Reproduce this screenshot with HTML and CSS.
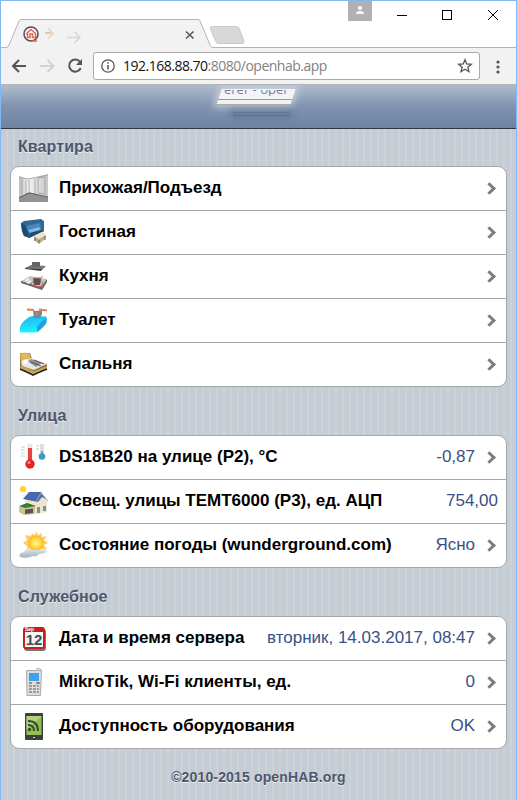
FILE: index.html
```
<!DOCTYPE html>
<html lang="ru">
<head>
<meta charset="utf-8">
<title>openHAB</title>
<link rel="stylesheet" href="styles.css">
</head>
<body>
<div class="window">
  <div class="tabstrip">
    <svg class="tabs" width="250" height="29" viewBox="0 0 250 29">
      <path d="M0 28.500H5Q7 28.500 8 26L18 2Q18.800.5 20 .5H197Q198.500.5 199 2L209 26Q210 28.500 212 28.500H250V29H0Z" fill="#f2f2f2"/>
      <path d="M0 28.500H5Q7 28.500 8 26L18 2Q18.800.5 20 .5H197Q198.500.5 199 2L209 26Q210 28.500 212 28.500H250" fill="none" stroke="#b4b4b4"/>
      <path d="M211 7.500H235Q237 7.500 238 9L243 22Q243.500 24.500 241 24.500H218Q215.500 24.500 214.500 22L209.500 10Q208.500 7.500 211 7.500Z" fill="#d8d8d8" stroke="#c9c9c9"/>
      <circle cx="30" cy="15" r="7" fill="#fafafa" stroke="#4e4e52" stroke-width="1.500"/>
      <path d="M25 15L30 10.500L35 15M26.500 14.500V18.500H29V15H31.500V18.500H34.500V14M31 22H36" fill="none" stroke="#ea6544" stroke-width="1.500"/>
      <path d="M44 14H50" stroke="#efc39f" stroke-width="2" fill="none"/>
      <path d="M47 9.500L52 14.500L47 19.500M66 18.500H79M73.500 13L79 18.500L73.500 24" stroke="#d8d5d0" stroke-width="1.600" fill="none"/>
      <path d="M185 12.500L192.500 19.500M192.500 12.500L185 19.500" stroke="#5a5a5a" stroke-width="1.700"/>
    </svg>
    <div class="controls">
      <span class="user"><svg width="24" height="20" viewBox="0 0 24 20"><circle cx="12" cy="7" r="2" fill="#fff"/><path d="M8 13Q8 10 12 10T16 13Z" fill="#fff"/></svg></span>
      <svg width="144" height="29" viewBox="0 0 144 29"><path d="M25 14.500H35" stroke="#000" fill="none"/><rect x="70.500" y="9.500" width="9" height="9" fill="none" stroke="#000"/><path d="M116 9L126 19M126 9L116 19" stroke="#000" fill="none"/></svg>
    </div>
  </div>
  <div class="toolbar">
    <svg class="nav" width="91" height="35" viewBox="0 0 91 35">
      <g fill="none" stroke-width="2"><path d="M25 18H12.500M18 12L12 18L18 24" stroke="#555"/><path d="M39 18H52M46.500 12L52.500 18L46.500 24" stroke="#d3d3d3"/><path d="M79 14A6 6 0 1 0 79.700 20" stroke="#555"/></g><path d="M81 11V17H75Z" fill="#555"/>
    </svg>
    <div class="address">
      <svg width="16" height="16" viewBox="0 0 16 16"><circle cx="8" cy="8" r="6.200" fill="none" stroke="#555" stroke-width="1.300"/><path d="M8 7V11.500M8 4.300V5.800" stroke="#555" stroke-width="1.500"/></svg>
      <span class="url"><b>192.168.88.70</b>:8080/openhab.app</span>
      <svg class="star" width="16" height="16" viewBox="0 0 16 16"><path d="M8 1.800L9.700 6L14.300 6.300L10.800 9.200L12 13.700L8 11.200L4 13.700L5.200 9.200L1.700 6.300L6.300 6Z" fill="none" stroke="#555" stroke-width="1.300"/></svg>
    </div>
    <svg class="dots" width="4" height="14" viewBox="0 0 4 14"><g fill="#555"><circle cx="2" cy="2" r="1.600"/><circle cx="2" cy="7" r="1.600"/><circle cx="2" cy="12" r="1.600"/></g></svg>
  </div>
  <header class="header">
    <span class="smudge-shadow"></span><span class="smudge"></span>
    <span class="title"><span>erer - oper</span></span>
  </header>
  <main>
    <h2>Квартира</h2>
    <ul>
      <li><svg class="icon" viewBox="0 0 30 30"><defs><linearGradient id="wall"><stop offset="0" stop-color="#bbb"/><stop offset=".3" stop-color="#f4f4f4"/><stop offset="1" stop-color="#c8c8c8"/></linearGradient></defs><path d="M0 3L8 6L29 1V24L10 21L0 25Z" fill="url(#wall)"/><path d="M0 25L10 20L29 24V29H0Z" fill="#929292"/><path d="M3 5V22M7 7V21M10 7V20M16 6V21M19 5L26 4V21L19 20ZM0 4L9 6L29 2" fill="none" stroke="#999" stroke-width=".8"/><path d="M0 25L10 20L29 24" fill="none" stroke="#666" stroke-width="1.200"/></svg><span class="label">Прихожая/Подъезд</span><i class="arrow"></i></li>
      <li><svg class="icon" viewBox="0 0 30 30"><path d="M2 6L5 4L22 2L25 4V14L10 21L5 19L3 14Z" fill="#326894"/><path d="M2 6L7 9L10 20L5 19L3 14Z" fill="#1f4a6d"/><path d="M7 9L21 6L22 11L9 14Z" fill="#4787bb"/><path d="M9 13L20 10L22 13L11 16Z" fill="#83b8e4"/><path d="M11 16L22 13L25 14L10 21Z" fill="#1e4c74"/><path d="M15 19L23 15L27 18L26 22L20 27L15 23Z" fill="#b6b08f"/><path d="M15 19L23 15L27 18L20 22Z" fill="#ebe6ce"/><path d="M16 21V24M20 23V26M26 19V23" stroke="#625f4e"/></svg><span class="label">Гостиная</span><i class="arrow"></i></li>
      <li><svg class="icon" viewBox="0 0 30 30"><path d="M6 7L12 4L27 5L23 9Z" fill="#777"/><path d="M13 1H21V6H13Z" fill="#666"/><path d="M6 7L23 8L22 10L6 8Z" fill="#444"/><path d="M2 20L11 15L28 18L22 26Z" fill="#c5c5c5"/><path d="M2 20L22 26L28 18V21L23 29L2 22Z" fill="#666"/><ellipse cx="18" cy="23" rx="6" ry="3" fill="none" stroke="#db514b"/><path d="M14 17H22L21 24H15Z" fill="#575055"/><path d="M14 17H22L24 15" stroke="#b68661" fill="none"/><path d="M6 20L10 18M8 22L12 20" stroke="#eee" stroke-width="2"/></svg><span class="label">Кухня</span><i class="arrow"></i></li>
      <li><svg class="icon" viewBox="0 0 30 30"><defs><linearGradient id="aqua" x2=".2" y2="1"><stop stop-color="#22b4f0"/><stop offset=".6" stop-color="#1ed6fa"/><stop offset="1" stop-color="#24f0ff"/></linearGradient></defs><path d="M1 27.500V22Q2 18 8 13.500Q11 11 14 11L27.500 11.500V17Q27 20 19 26.500Q18 27.500 16 27.500Z" fill="url(#aqua)"/><path d="M18 27V22Q20 18 27.500 13V17Q27 20 19 26.500Z" fill="#1fa3e0"/><path d="M8 4.500L15 5M20 4.500L28 5.500" stroke="#e77a4c" stroke-width="2" fill="none"/><path d="M14 6L23 5.500V9L21 13H15Z" fill="#6d8d92"/><path d="M16 7H20V10H16Z" fill="#bd8068"/></svg><span class="label">Туалет</span><i class="arrow"></i></li>
      <li><svg class="icon" viewBox="0 0 30 30"><path d="M1 4L11 4L13 10L28 15V19L14 27L1 19Z" fill="#89713c"/><path d="M1 5Q5 2 11 5L12 12L2 13Z" fill="#e2b75a"/><path d="M2 13L12 9L28 15L15 21L3 17Z" fill="#e8e8e8"/><path d="M8 12L12 10L23 14L17 18Z" fill="#929292"/><path d="M3 12L7 10L10 12L6 15Z" fill="#fff"/><path d="M2 16L15 22L28 17L28 20L15 26L1 20Z" fill="#c5a259"/><path d="M1 20L14 26L28 20" stroke="#27231f" stroke-width="1.500" fill="none"/><path d="M12 13L22 17M15 11L25 15" stroke="#555"/></svg><span class="label">Спальня</span><i class="arrow"></i></li>
    </ul>
    <h2>Улица</h2>
    <ul>
      <li><svg class="icon" viewBox="0 0 30 30"><path d="M2 5H6M2 8H6M2 11H6M2 14H6M17 4H20M17 7H20" stroke="#c8cbd0"/><path d="M11 2V23" stroke="#e6e6e6" stroke-width="5"/><path d="M11 6V23" stroke="#e94141" stroke-width="4"/><circle cx="11" cy="22" r="4.700" fill="#e12626"/><circle cx="10" cy="20.500" r="1.500" fill="#fb8980"/><path d="M23 2V13" stroke="#dce0e4" stroke-width="4"/><path d="M23 9V14" stroke="#58a7cb" stroke-width="2"/><circle cx="23" cy="14.500" r="3.300" fill="#4697c2"/></svg><span class="label">DS18B20 на улице (P2), °C</span><span class="value">-0,87</span><i class="arrow"></i></li>
      <li><svg class="icon" viewBox="0 0 30 30"><circle cx="4" cy="3" r="3" fill="#ffd129"/><path d="M6 12L22 6L28 15V26L18 28L7 24Z" fill="#eee6cb"/><path d="M4 13L10 6L22 6L28 14L23 11L19 16Z" fill="#4669b1"/><path d="M17 16L22 7L29 15" fill="none" stroke="#b8a99c"/><path d="M0 21L8 17L16 20V28L5 29L0 26Z" fill="#d1c38e"/><path d="M0 20L8 17L17 20L6 22Z" fill="#397a37"/><path d="M6 23.500L14 22.500V27L6 28Z" fill="#555"/><path d="M18 21H21V27H18ZM24 20H27V25H24Z" fill="#7695a2"/></svg><span class="label">Освещ. улицы TEMT6000 (P3), ед. АЦП</span><span class="value wide">754,00</span></li>
      <li><svg class="icon" viewBox="0 0 30 30"><defs><radialGradient id="sun"><stop stop-color="#fff3a1"/><stop offset=".65" stop-color="#ffdc3b"/><stop offset="1" stop-color="#ffae25"/></radialGradient><linearGradient id="cloud" x2="0" y2="1"><stop stop-color="#e3e9ed"/><stop offset="1" stop-color="#9fb1bb"/></linearGradient></defs><path d="M17 1L19 5L23 3L23 7L28 6L25 10L29 13L25 15L28 20L22 19L18 23L14 20L8 21L8 16L4 13L8 10L6 5L12 6L13 3L16 5Z" fill="#ffce61"/><circle cx="17" cy="13" r="7.500" fill="url(#sun)"/><path d="M1 27Q-1 23 5 22Q8 16 13 20Q15 19 18 20Q27 19 28 22Q23 24 20 24Q18 27 14 26Q8 29 1 27Z" fill="url(#cloud)"/></svg><span class="label">Состояние погоды (wunderground.com)</span><span class="value">Ясно</span><i class="arrow"></i></li>
    </ul>
    <h2>Служебное</h2>
    <ul>
      <li><svg class="icon" viewBox="0 0 30 30"><rect x="5" y="6" width="22" height="22" rx="3" fill="#777"/><rect x="4" y="4" width="22" height="22" rx="3" fill="#c12220"/><path d="M6 9H24V24H6Z" fill="#f5f5f5"/><text class="month" x="6" y="8">Sep</text><text class="day" x="15" y="22" text-anchor="middle">12</text></svg><span class="label">Дата и время сервера</span><span class="value">вторник, 14.03.2017, 08:47</span><i class="arrow"></i></li>
      <li><svg class="icon" viewBox="0 0 30 30"><rect x="17.500" y="1.500" width="4" height="9" rx="1" fill="#eee" stroke="#aaa"/><path d="M7.500 3.500H22.500L21.500 28.500H8Z" fill="#ddd" stroke="#aaa"/><path d="M10 6H20V14H10Z" fill="#3ea1ef"/><path d="M10 16H13M18 16H21" stroke="#77a866" stroke-width="2"/><path d="M17 16H20" stroke="#d25757" stroke-width="1.500"/><path d="M10 19H13M14 19H17M18 19H20M10 22H13M14 22H17M18 22H20M10 25H13M14 25H17M18 25H20" stroke="#888" stroke-width="1.500"/></svg><span class="label">MikroTik, Wi-Fi клиенты, ед.</span><span class="value">0</span><i class="arrow"></i></li>
      <li><svg class="icon" viewBox="0 0 30 30"><rect x="6" y="2" width="18" height="27" rx="1" fill="#3b403c"/><path d="M7.500 5H22.500V24H7.500Z" fill="#93bd55"/><path d="M7.500 5H22.500L7.500 19Z" fill="#b5cf82"/><path d="M9 10Q19 10 19 20M9 14Q15 14 15 20" fill="none" stroke="#39492d" stroke-width="2"/><circle cx="10.500" cy="18.500" r="1.700" fill="#39492d"/><path d="M14 26.500H16" stroke="#ccc"/></svg><span class="label">Доступность оборудования</span><span class="value">OK</span><i class="arrow"></i></li>
    </ul>
    <footer>©2010-2015 openHAB.org</footer>
  </main>
</div>
</body>
</html>
```
FILE: styles.css
```
* { box-sizing: border-box; }
body { margin: 0; font-family: "Liberation Sans", Arial, sans-serif; }
svg { display: block; flex-shrink: 0; }
.window { height: 800px; overflow: hidden; border: 1px solid #82b8f6; border-bottom: 0; background: #fff; }
.tabstrip { height: 47px; display: flex; justify-content: space-between; border-bottom: 1px solid #b4b4b4; }
.tabs { margin-top: 18px; }
.controls { display: flex; width: 168px; }
.user { width: 24px; height: 20px; background: #b1b1b1; }
.toolbar { height: 37px; display: flex; background: #f2f2f2; border-bottom: 1px solid #b5b5b5; }
.nav { margin-right: 1px; }
.address { width: 387px; height: 28px; margin-top: 4px; padding: 0 6px; display: flex; align-items: center; gap: 7px; background: #fff; border: 1px solid #a9a9a9; border-radius: 3px; }
.url { font: 14px/20px "Open Sans", sans-serif; letter-spacing: -.5px; color: #828282; white-space: nowrap; }
.url b { font-weight: 400; color: #111; }
.star { margin-left: auto; }
.dots { margin: 12px 0 0 16px; }
.header { position: relative; height: 44px; overflow: hidden; border-bottom: 1px solid #2d3642; background: linear-gradient(#b0bccd, #8194b0 48%, #6d84a2); }
.smudge { position: absolute; left: 218px; top: 4px; width: 74px; height: 16px; background: linear-gradient(#f4f4f6 10px, #999 10px 11px, #f0f0f0 11px 15px, #aaa 15px); transform: skewX(-18deg); box-shadow: 0 0 7px 3px #dfe3e999; }
.smudge-shadow { position: absolute; left: 232px; top: 22px; width: 57px; height: 10px; background: linear-gradient(#667e9e 5px, #5a7191 5px 6px, #667e9e 6px 8px, #5a7191 8px 9px, #667e9e 9px); box-shadow: 0 0 6px 3px #667e9e; }
.title { position: absolute; left: 223px; top: 5px; height: 6px; overflow: hidden; font: 13px/18px "Open Sans", sans-serif; color: #738096; white-space: nowrap; }
.title span { display: block; margin-top: -10px; }
main { height: 672px; padding: 0 9px; background: repeating-linear-gradient(90deg, #c5ccd3 0 5px, #cbd2d8 5px 7px); }
h2 { height: 37px; margin: 0; padding: 8px 8px 0; font-size: 16px; line-height: 20px; letter-spacing: .1px; color: #4d566c; text-shadow: 0 1px #ffffffb3; }
ul + h2 { height: 48px; padding-top: 19px; }
ul { margin: 0; padding: 0; list-style: none; border: 1px solid #a5a8ab; border-radius: 9px; overflow: hidden; background: #fff; }
li { height: 44px; display: flex; padding: 0 9px 0 8px; }
li + li { border-top: 1px solid #a5a8ab; }
li:first-child { height: 43px; }
.icon { width: 30px; height: 30px; margin: 6px 10px 0 0; }
.label, .value { font-size: 17px; line-height: 20px; margin-top: 11px; white-space: nowrap; }
.label { font-weight: 700; }
.value { margin-left: auto; color: #395185; }
.value.wide { margin-right: -1px; }
.arrow { width: 9px; height: 9px; margin: 17px 3px 0 10px; border: solid #7d7d7d; border-width: 3px 3px 0 0; transform: rotate(45deg); }
.label + .arrow { margin-left: auto; }
.month { font: 700 5px "Liberation Sans", sans-serif; fill: #fff; }
.day { font: 700 15px "Liberation Sans", sans-serif; fill: #454b50; }
footer { padding-top: 20px; text-align: center; font-size: 14px; line-height: 16px; letter-spacing: .15px; font-weight: 700; color: #4d566c; text-shadow: 0 1px #ffffffb3; }
```
